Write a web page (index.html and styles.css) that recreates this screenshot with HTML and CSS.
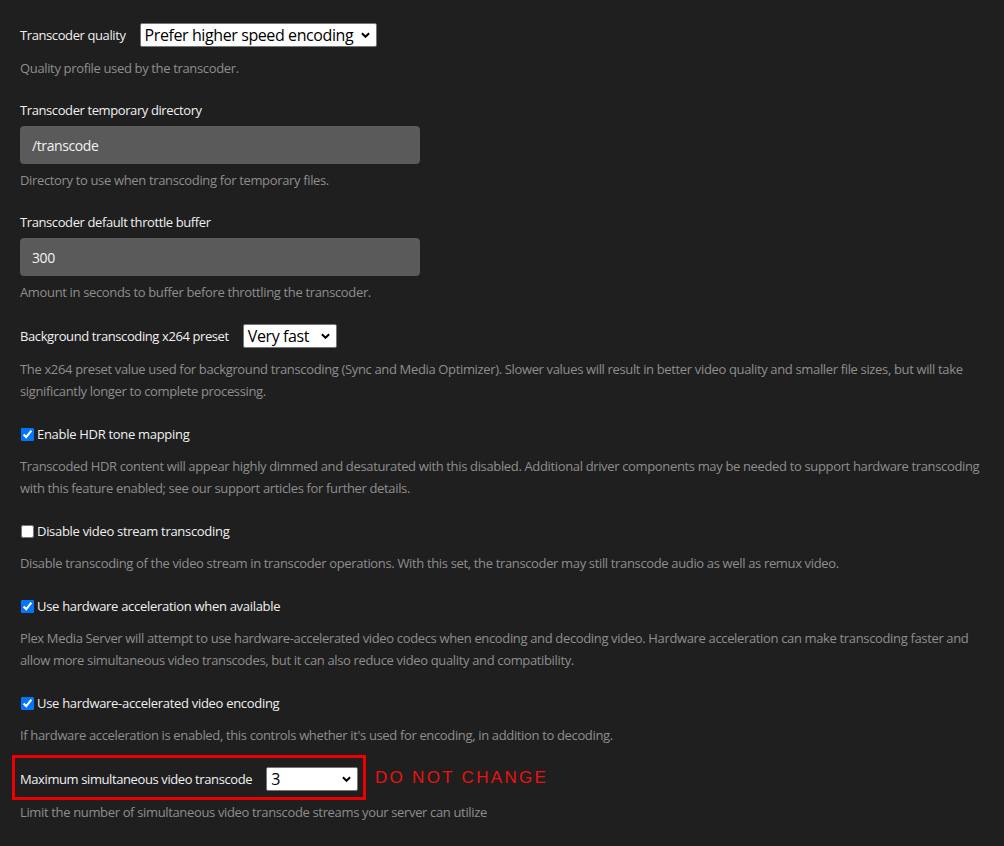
FILE: index.html
```html
<!DOCTYPE html>
<html>
<head>
<meta charset="utf-8">
<link rel="stylesheet" href="styles.css">
</head>
<body>
<div class="page">
  <div class="group">
    <div class="row">
      <span class="label">Transcoder quality</span>
      <span class="select w-quality"><span class="select-text">Prefer higher speed encoding</span><svg class="chev" viewBox="0 0 10 6"><path d="M1 1l4 4 4-4" /></svg></span>
    </div>
    <div class="desc">Quality profile used by the transcoder.</div>
  </div>

  <div class="group">
    <div class="label block">Transcoder temporary directory</div>
    <div class="input">/transcode</div>
    <div class="desc tight">Directory to use when transcoding for temporary files.</div>
  </div>

  <div class="group">
    <div class="label block">Transcoder default throttle buffer</div>
    <div class="input">300</div>
    <div class="desc tight">Amount in seconds to buffer before throttling the transcoder.</div>
  </div>

  <div class="group">
    <div class="row">
      <span class="label">Background transcoding x264 preset</span>
      <span class="select w-preset"><span class="select-text">Very fast</span><svg class="chev" viewBox="0 0 10 6"><path d="M1 1l4 4 4-4" /></svg></span>
    </div>
    <div class="desc">The x264 preset value used for background transcoding (Sync and Media Optimizer). Slower values will result in better video quality and smaller file sizes, but will take significantly longer to complete processing.</div>
  </div>

  <div class="group">
    <label class="check-row"><input type="checkbox" checked><span>Enable HDR tone mapping</span></label>
    <div class="desc">Transcoded HDR content will appear highly dimmed and desaturated with this disabled. Additional driver components may be needed to support hardware transcoding with this feature enabled; see our support articles for further details.</div>
  </div>

  <div class="group">
    <label class="check-row"><input type="checkbox"><span>Disable video stream transcoding</span></label>
    <div class="desc">Disable transcoding of the video stream in transcoder operations. With this set, the transcoder may still transcode audio as well as remux video.</div>
  </div>

  <div class="group">
    <label class="check-row"><input type="checkbox" checked><span>Use hardware acceleration when available</span></label>
    <div class="desc">Plex Media Server will attempt to use hardware-accelerated video codecs when encoding and decoding video. Hardware acceleration can make transcoding faster and allow more simultaneous video transcodes, but it can also reduce video quality and compatibility.</div>
  </div>

  <div class="group">
    <label class="check-row"><input type="checkbox" checked><span>Use hardware-accelerated video encoding</span></label>
    <div class="desc">If hardware acceleration is enabled, this controls whether it's used for encoding, in addition to decoding.</div>
  </div>

  <div class="group">
    <div class="row annotated">
      <span class="label">Maximum simultaneous video transcode</span>
      <span class="select w-max"><span class="select-text">3</span><svg class="chev" viewBox="0 0 10 6"><path d="M1 1l4 4 4-4" /></svg></span>
      <span class="redbox"></span>
      <span class="warn">DO NOT CHANGE</span>
    </div>
    <div class="desc">Limit the number of simultaneous video transcode streams your server can utilize</div>
  </div>
</div>
</body>
</html>
```

FILE: styles.css
```css
html, body {
  margin: 0;
  padding: 0;
  background: #1f1f1f;
}
body {
  font-family: "Open Sans", "Noto Sans", sans-serif;
  color: #eeeeee;
}
.page {
  padding: 23px 14px 20px 20px;
}
.group {
  margin-bottom: 21px;
}
.row {
  display: flex;
  align-items: center;
  height: 24px;
}
.label {
  font-size: 13px;
  line-height: 20px;
  color: #f0f0f0;
  letter-spacing: -0.4px;
}
.label.block {
  display: block;
}
.row .label {
  margin-right: 14px;
}
.select {
  position: relative;
  display: flex;
  align-items: center;
  box-sizing: border-box;
  height: 24px;
  background: #ffffff;
  border: 1px solid #767676;
  border-radius: 2px;
  color: #000;
  font-size: 16px;
  padding-left: 4px;
  letter-spacing: -0.4px;
}
.select-text {
  white-space: nowrap;
}
.chev {
  position: absolute;
  right: 6px;
  top: 8px;
  width: 9px;
  height: 6px;
  fill: none;
  stroke: #000;
  stroke-width: 2.2;
}
.w-quality { width: 237px; }
.w-preset { width: 94px; }
.w-max { width: 92px; }
.desc {
  margin-top: 10px;
  font-size: 13px;
  line-height: 22px;
  color: #8e8e8e;
  letter-spacing: -0.35px;
}
.desc.tight {
  margin-top: 5px;
}
.input {
  box-sizing: border-box;
  margin-top: 6px;
  width: 400px;
  height: 38px;
  background: #5a5a5a;
  border-radius: 4px;
  padding: 0 12px;
  font-size: 14px;
  line-height: 39px;
  color: #f2f2f2;
  letter-spacing: -0.4px;
}
.check-row {
  display: flex;
  align-items: center;
  height: 22px;
  font-size: 13px;
  color: #f0f0f0;
  letter-spacing: -0.3px;
}
.check-row input {
  margin: 0 3px 0 1px;
  width: 13px;
  height: 13px;
  accent-color: #0075ff;
}
.annotated {
  position: relative;
}
.redbox {
  position: absolute;
  left: -8px;
  top: -12px;
  width: 354px;
  height: 45px;
  box-sizing: border-box;
  border: 3px solid #ee0000;
}
.warn {
  position: absolute;
  left: 355px;
  top: 1px;
  font-family: "Liberation Sans", sans-serif;
  font-size: 17px;
  letter-spacing: 2.3px;
  color: #ee1111;
  line-height: 20px;
}
```
